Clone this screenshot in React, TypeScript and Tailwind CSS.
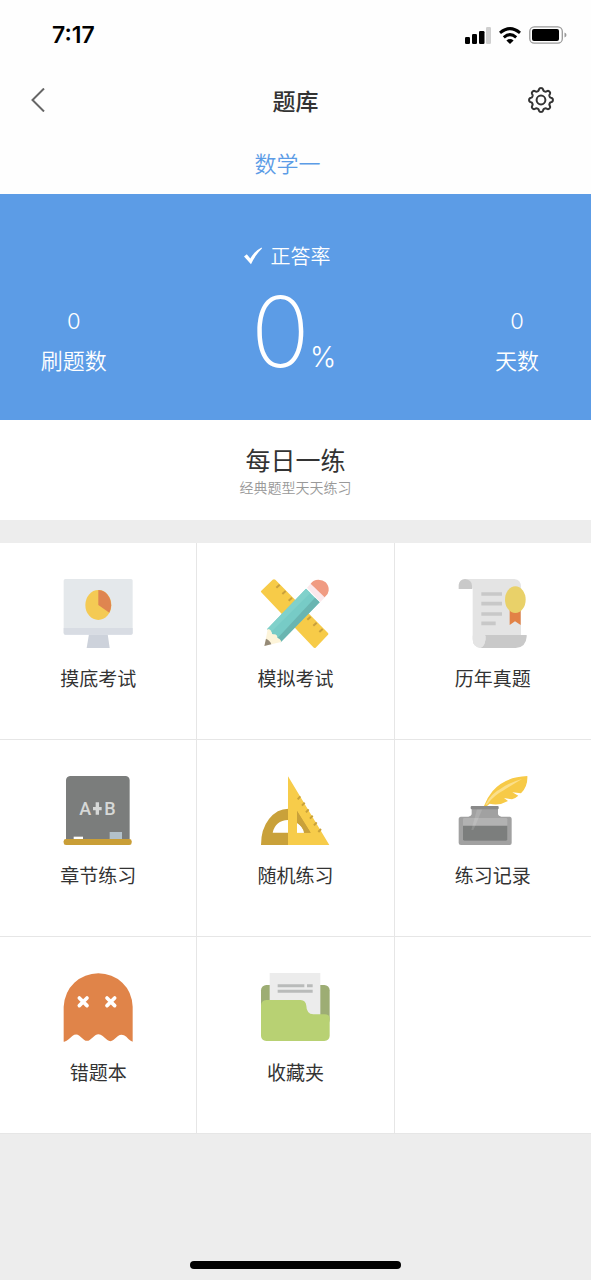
import type { ReactNode } from "react";

function gearPath(cx: number, cy: number): string {
  const points: string[] = [];
  for (let i = 0; i < 240; i++) {
    const a = (i / 240) * Math.PI * 2;
    const r = 10.6 + 1.4 * Math.tanh(1.6 * Math.cos(8 * a));
    points.push(`${(cx + r * Math.sin(a)).toFixed(2)} ${(cy - r * Math.cos(a)).toFixed(2)}`);
  }
  return `M${points.join("L")}Z`;
}

function Art({ viewBox, children }: { viewBox: string; children: ReactNode }) {
  return (
    <svg viewBox={viewBox} className="size-[70px]" aria-hidden="true">
      {children}
    </svg>
  );
}

function MonitorArt() {
  return (
    <Art viewBox="70 57 210 210">
      <path d="M148 222h56l6 42h-69z" fill="#cdd2db" />
      <rect x="72" y="57" width="207" height="167" rx="5" fill="#e4e8eb" />
      <path d="M72 204h207v15q0 5-5 5H77q-5 0-5-5z" fill="#d8dce3" />
      <ellipse cx="176" cy="135" rx="39" ry="45" fill="#f4ca54" />
      <path d="M176 135V90a39 45 0 0 1 33 68z" fill="#df8550" />
    </Art>
  );
}

function PencilArt() {
  return (
    <Art viewBox="61 57 210 210">
      <path d="M64 96q-1-2 1-4l34-33q4-3 8 0l158 160q2 3 0 5l-37 39q-4 2-7-1z" fill="#f7cb48" />
      <path d="M110 83l10-9M128 102l10-9M147 122l10-9M203 179l10-9M221 197l10-9M239 216l10-9" stroke="#c9a03c" strokeWidth="6" />
      <path d="M199 86l41 41L123 247l-9-13-15-4-4-15-13-7z" fill="#77cbc6" />
      <path d="M226 113l14 14L123 247l-9-13z" fill="#6ab5b1" />
      <path d="M199 86l13 13L95 215l-13-7z" fill="#80d1cb" />
      <path d="M84 207q10 1 11 9 0 7 5 7 14-2 13 12 8-1 12 11L75 257z" fill="#fdf4d9" />
      <path d="M79 236q12 5 16 17l-21 5z" fill="#958a77" />
      <path d="M202 83l12-13 42 42-14 14z" fill="#fbe9ec" />
      <path d="M213 71q8-12 23-12 14 0 22 8 11 12 9 25-1 11-12 20z" fill="#f09b82" />
    </Art>
  );
}

function ScrollArt() {
  return (
    <Art viewBox="67 57 210 210">
      <path d="M88 57h148q20 2 20 24v146l-108 1v36h-14q-23-3-23-27V87z" fill="#e4e4e4" />
      <path d="M69 87V75q2-17 19-18 20 2 21 20v10z" fill="#c9c9c9" />
      <path d="M149 225h124v5q-2 32-33 34H134q14-7 15-25z" fill="#c9c9c9" />
      <path d="M111 227h38v10q-1 22-15 27-23-3-23-27z" fill="#e4e4e4" />
      <path d="M137 102h62M137 131h62M137 162h62M137 190h43" stroke="#c8c8c8" strokeWidth="11" />
      <path d="M222 148h33v47l-17-11-16 11z" fill="#e28246" />
      <ellipse cx="239" cy="119" rx="31" ry="40" fill="#e9d169" />
    </Art>
  );
}

function BlackboardArt() {
  return (
    <Art viewBox="70 48 210 210">
      <path d="M79 238V60q1-10 12-12h168q10 2 11 12v178z" fill="#7b7d7c" />
      <g fill="#d6d8d7" fontFamily="Roboto, sans-serif" fontSize="54" fontWeight="500">
        <text x="137" y="165" textAnchor="middle">A</text>
        <text x="211" y="165" textAnchor="middle">B</text>
      </g>
      <path d="M173 127v37M160 146h26" stroke="#d6d8d7" strokeWidth="10" />
      <rect x="102" y="230" width="28" height="9" fill="#fff" />
      <rect x="210" y="216" width="37" height="24" fill="#b3c1ca" />
      <rect x="72" y="237" width="204" height="18" rx="7" fill="#c99e37" />
    </Art>
  );
}

function SetSquareArt() {
  return (
    <Art viewBox="61 48 210 210">
      <path d="M64 255q0-48 24-78 24-31 58-31 40 0 64 35 16 25 16 74z" fill="#c9a13a" />
      <path d="M99 218q8-36 46-38 40 2 47 38z" fill="#fff" />
      <path fillRule="evenodd" d="M145 49l124 206H145zM172 153v65h41z" fill="#f7cc4a" />
      <path d="M172 153l41 65h-20q-5-17-21-28z" fill="#c9a13a" />
      <path d="M172 190v28h21q-5-19-21-28z" fill="#fff" />
      <path d="M174 118l8-9M187 137l8-9M199 157l8-9M211 176l8-9M223 196l8-9M236 216l8-9" stroke="#c9a13a" strokeWidth="6" />
    </Art>
  );
}

function InkwellArt() {
  return (
    <Art viewBox="67 48 210 210">
      <path d="M108 145h79v18q1 6 10 7h26q5 1 5 6v73q0 6-6 6H76q-7 0-7-6v-73q0-5 6-6h23q9-1 10-7z" fill="#a1a1a1" />
      <rect x="82" y="174" width="133" height="68" rx="4" fill="#b2b2b2" />
      <path d="M82 197h133v41q0 4-4 4H86q-4 0-4-4z" fill="#7c7e7d" />
      <path d="M124 148h16l-21 49-6 13h-6z" fill="#fff" opacity=".13" />
      <rect x="105" y="138" width="84" height="10" rx="3" fill="#898989" />
      <path d="M145 138q10-26 26-45 35-42 104-45 2 32-19 52l-26-3 18 10q-9 8-19 11l-24-4 12 9q-26 15-55 8l-8 7z" fill="#f7ca47" />
      <path d="M149 134q19-35 45-47 28-20 65-30-30 18-55 34-29 15-50 43z" fill="#fbdf8a" />
    </Art>
  );
}

function GhostArt() {
  return (
    <Art viewBox="70 54 210 210">
      <path d="M72 260V155q3-45 32-72 31-27 72-28 42 1 72 28 29 27 31 72v105q-6-1-12-7-7-9-14-12-9-4-18 2l-14 12q-9 7-18 0l-14-12q-11-9-22-2l-16 13q-9 7-18 0l-14-12q-10-7-21 1l-11 10q-6 6-13 7z" fill="#e08449" />
      <path d="M119 129l23 23M142 129l-23 23M202 129l23 23M225 129l-23 23" stroke="#fff" strokeWidth="11" strokeLinecap="round" />
    </Art>
  );
}

function FolderArt() {
  return (
    <Art viewBox="61 54 210 210">
      <rect x="64" y="90" width="206" height="120" rx="16" fill="#9dad74" />
      <path d="M90 54h152v130H90z" fill="#ececec" />
      <path d="M114 92h80M202 92h17M114 109h105" stroke="#b9bbba" strokeWidth="9" />
      <path d="M64 151q1-15 16-16h103q15 1 17 17 0 24 21 26h34q15 0 15 12v53q-1 14-16 15H80q-15-1-16-15z" fill="#b8d173" />
    </Art>
  );
}

const entries = [
  { label: "摸底考试", art: <MonitorArt /> },
  { label: "模拟考试", art: <PencilArt /> },
  { label: "历年真题", art: <ScrollArt /> },
  { label: "章节练习", art: <BlackboardArt /> },
  { label: "随机练习", art: <SetSquareArt /> },
  { label: "练习记录", art: <InkwellArt /> },
  { label: "错题本", art: <GhostArt /> },
  { label: "收藏夹", art: <FolderArt /> },
];

function StatusBar() {
  return (
    <div className="flex h-[70px] items-center justify-between pr-6 pl-[52px] text-black">
      <span className="font-[Inter,sans-serif] text-[23px] leading-7 font-semibold">7:17</span>
      <div className="flex items-center gap-2">
        <svg viewBox="0 0 26 17" className="h-[17px] w-[26px]" aria-hidden="true">
          <rect x="0" y="10" width="5" height="7" rx="1.2" />
          <rect x="7" y="7" width="5" height="10" rx="1.2" />
          <rect x="14" y="4" width="5.5" height="13" rx="1.2" />
          <rect x="21" y="0" width="5" height="17" rx="1.2" fill="#cfcfcf" />
        </svg>
        <svg viewBox="0 0 22 17" className="h-[17px] w-[22px]" fill="none" stroke="#000" strokeWidth="3" aria-hidden="true">
          <path d="M1 5.800Q11-2.600 21 5.800" />
          <path d="M4.800 10.300Q11 4.900 17.200 10.300" />
          <path d="M11 17l-3.600-3.600Q11 10.600 14.600 13.400z" fill="#000" stroke="none" />
        </svg>
        <svg viewBox="0 0 38 18" className="h-[18px] w-[38px]" aria-hidden="true">
          <rect x="0.8" y="0.8" width="32.500" height="16.400" rx="4.500" fill="none" stroke="#999" strokeWidth="1.300" />
          <rect x="3" y="3" width="27" height="12" rx="2" />
          <path d="M35.500 6.500q2 .8 2 2.500t-2 2.500z" fill="#999" />
        </svg>
      </div>
    </div>
  );
}

function Stat({ value, label }: { value: string; label: string }) {
  return (
    <div className="flex w-1/4 flex-col items-center gap-2 pt-[111px]">
      <span className="font-[Inter,sans-serif] text-[22px] leading-8 font-light">{value}</span>
      <span className="text-[22px] leading-7 font-[350]">{label}</span>
    </div>
  );
}

export default function App() {
  return (
    <div className="flex min-h-screen flex-col bg-[#ededed] font-['Noto_Sans_CJK_SC',sans-serif] text-[#333]">
      <header className="bg-[#fefefe]">
        <StatusBar />
        <div className="flex h-[60px] items-center justify-between px-6">
          <button type="button" aria-label="返回" className="flex size-7 items-center justify-center">
            <svg viewBox="0 0 14 24" className="h-6 w-3.5" fill="none" stroke="#666" strokeWidth="2" aria-hidden="true">
              <path d="M13 .5L1.500 12L13 23.500" />
            </svg>
          </button>
          <h1 className="text-[23px] leading-8 font-medium">题库</h1>
          <button type="button" aria-label="设置" className="mr-3 -ml-3 flex size-7 items-center justify-center">
            <svg viewBox="0 0 28 28" className="size-7" fill="none" stroke="#333" strokeWidth="2" strokeLinejoin="round" aria-hidden="true">
              <path d={gearPath(14, 14)} />
              <circle cx="14" cy="14" r="4.400" />
            </svg>
          </button>
        </div>
        <div className="flex h-16 items-center justify-center pr-4">
          <button type="button" className="text-[22px] leading-8 font-[350] text-[#5c9ce6]">数学一</button>
        </div>
      </header>

      <section className="flex h-[226px] bg-[#5c9ce6] text-white">
        <Stat value="0" label="刷题数" />
        <div className="flex w-1/2 flex-col items-center pt-[46px]">
          <div className="flex items-center gap-2 pr-[18px]">
            <svg viewBox="0 0 20 18" className="h-[18px] w-5" fill="#fff" aria-hidden="true">
              <path d="M1 9.600L3.800 7.300L7.300 11.600Q11.500 4 18.600 .5L19 1.500Q12.500 7.500 8 17.200z" />
            </svg>
            <span className="text-[20px] leading-8 font-[350]">正答率</span>
          </div>
          <div className="mt-1 flex items-baseline pr-1 font-[Inter,sans-serif]">
            <span className="text-[98px] leading-[112px] font-extralight">0</span>
            <span className="text-[28px] leading-8 font-light">%</span>
          </div>
        </div>
        <Stat value="0" label="天数" />
      </section>

      <button type="button" className="flex h-[100px] flex-col items-center justify-center bg-white pt-0.5">
        <span className="text-[25px] leading-8">每日一练</span>
        <span className="text-[14px] leading-6 font-[350] text-[#999]">经典题型天天练习</span>
      </button>

      <main className="mt-[23px] grid grid-cols-3 gap-px border-b border-[#e6e6e6] bg-[#e6e6e6]">
        {entries.map(({ label, art }) => (
          <button key={label} type="button" className="flex h-[196px] flex-col items-center gap-[15px] bg-white pt-9">
            {art}
            <span className="text-[19px] leading-7">{label}</span>
          </button>
        ))}
        <div className="bg-white" />
      </main>

      <div className="mt-auto flex justify-center pt-8 pb-[11px]">
        <div className="h-2 w-[211px] rounded-full bg-black" />
      </div>
    </div>
  );
}
